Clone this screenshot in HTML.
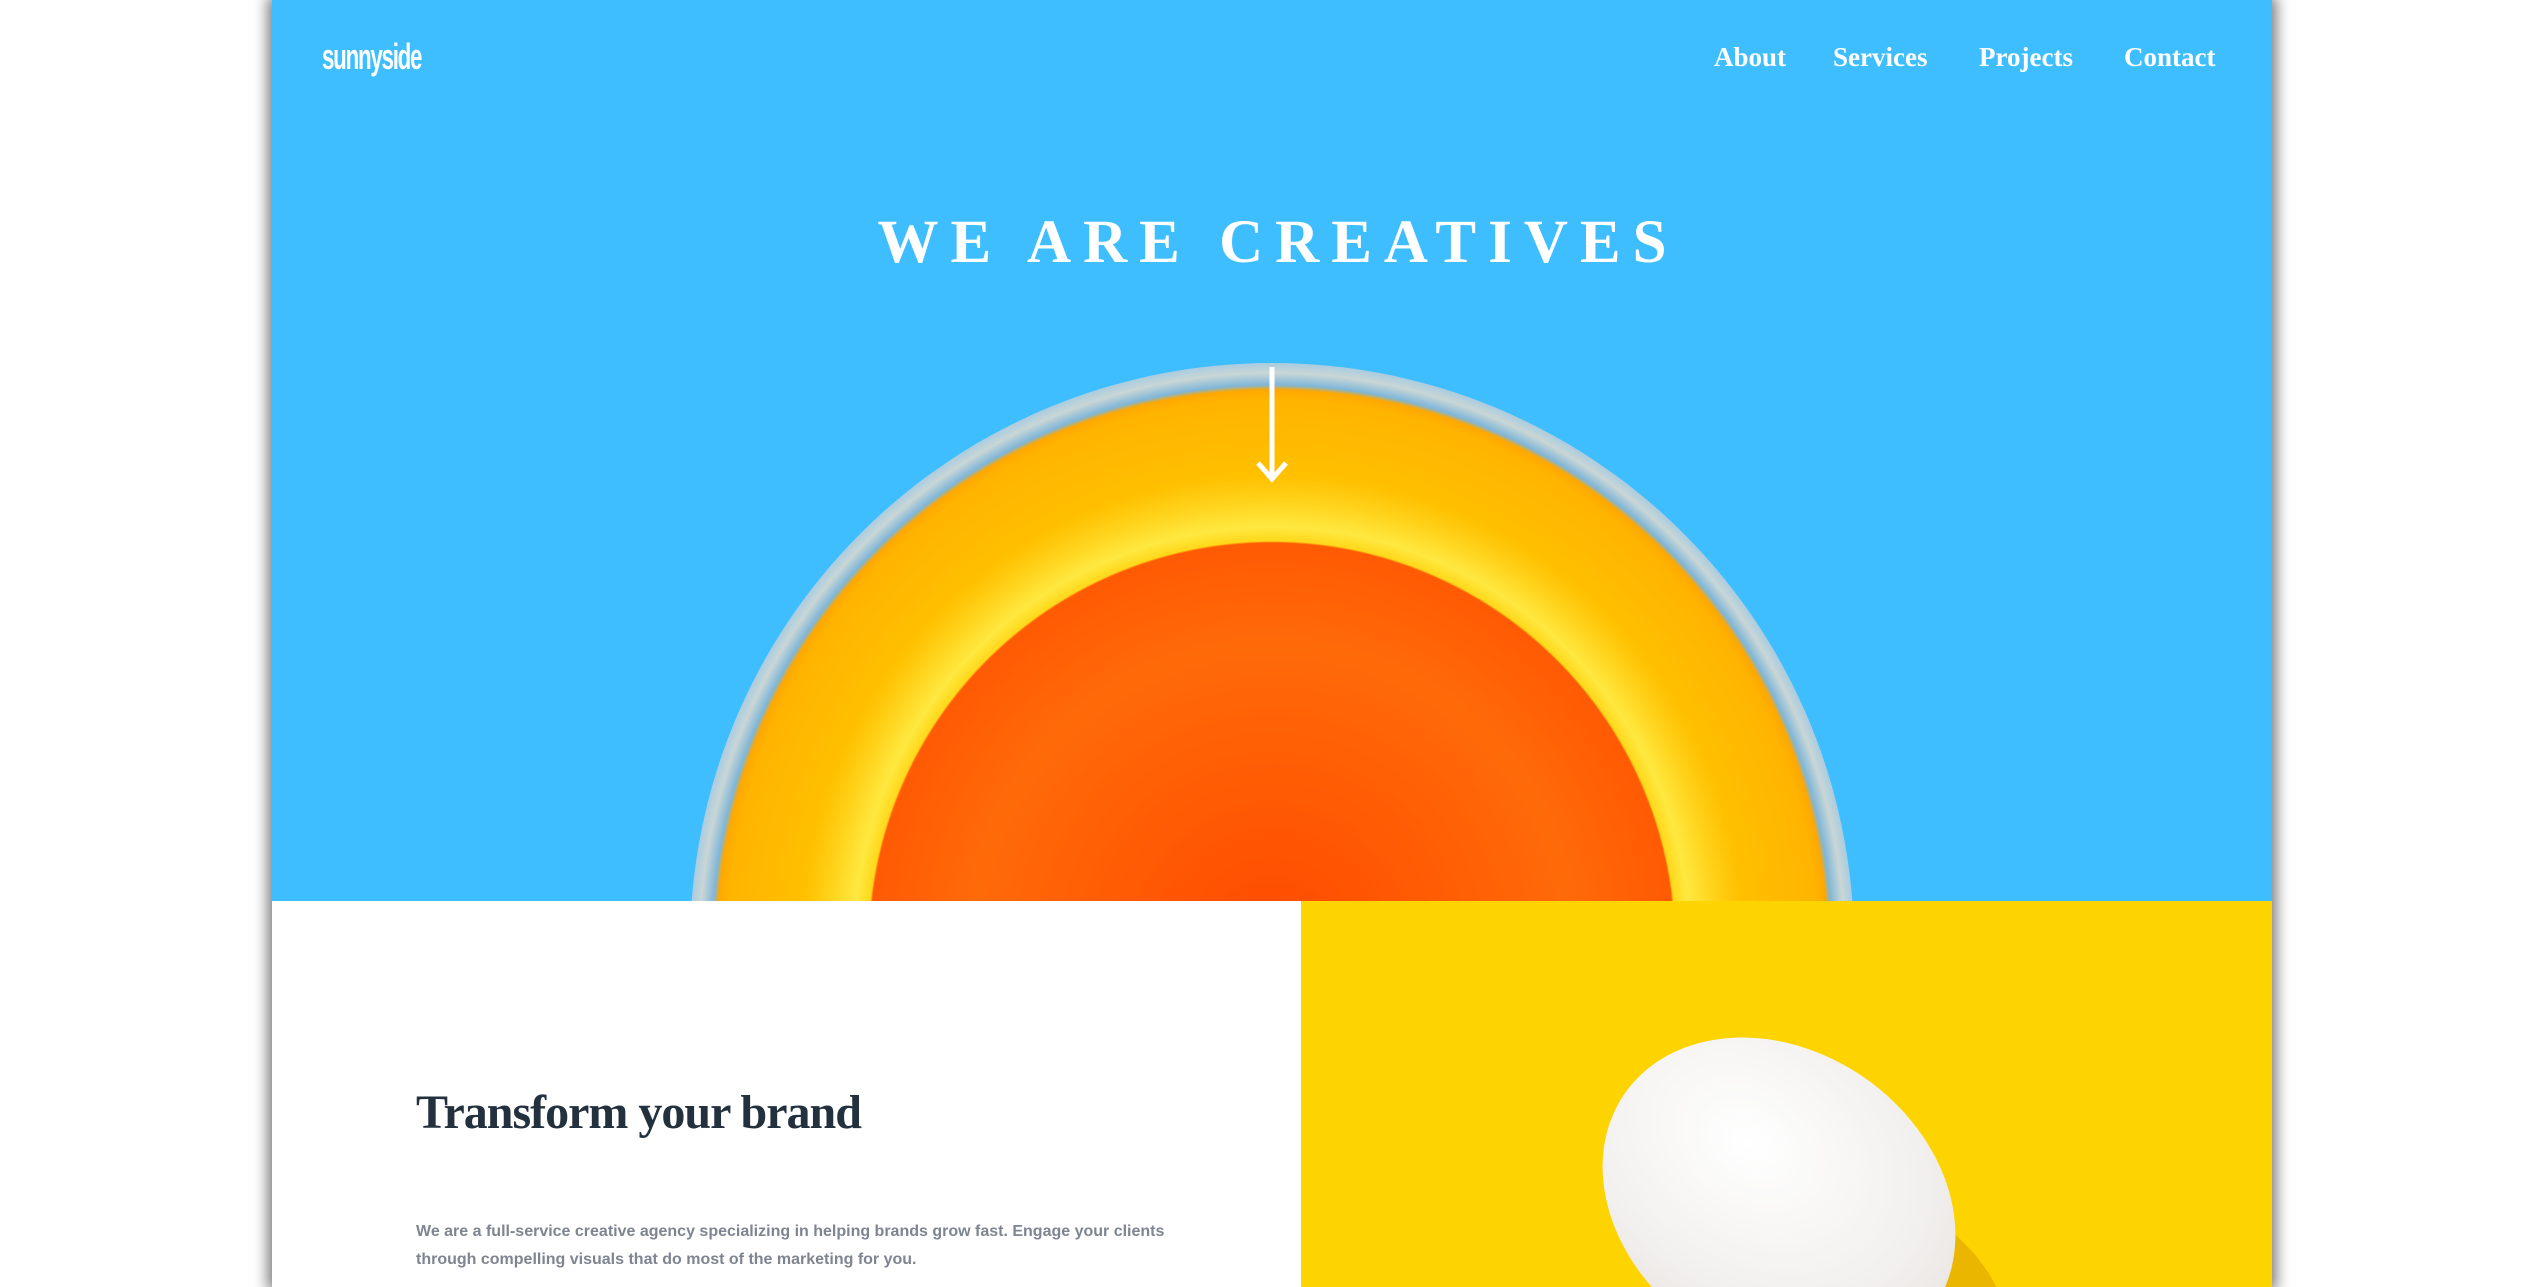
<!DOCTYPE html>
<html><head><meta charset="utf-8"><style>
html,body{margin:0;padding:0;background:#fff;width:2543px;height:1287px;overflow:hidden}
.wrap{position:absolute;left:272px;top:0;width:2000px;height:1287px;box-shadow:0 0 14px 4px rgba(0,0,0,.55);overflow:hidden;background:#fff}
.hero{position:absolute;left:0;top:0;width:2000px;height:901px;background:#3ebeff;overflow:hidden}
.logo{position:absolute;left:50px;top:36px;font-family:"Liberation Sans",sans-serif;font-weight:bold;color:#fff;font-size:36px;letter-spacing:-2px;transform:scaleX(.62);transform-origin:left}
.nav{position:absolute;top:42px;font-family:"Liberation Serif",serif;font-weight:bold;color:#fff;font-size:27px}
h1{position:absolute;left:0;width:2000px;top:208px;margin:0;text-align:center;font-family:"Liberation Serif",serif;font-weight:900;color:#fff;font-size:61px;letter-spacing:12px;text-indent:12px}
.c{position:absolute;border-radius:50%}
.p{font-family:"Liberation Sans",sans-serif}
</style></head><body>
<div class="wrap">
<div class="hero">
<div class="logo">sunnyside</div>
<div class="nav" style="left:1442px">About</div>
<div class="nav" style="left:1561px">Services</div>
<div class="nav" style="left:1707px">Projects</div>
<div class="nav" style="left:1852px">Contact</div>
<div class="c" style="left:418px;top:363px;width:1164px;height:1164px;background:radial-gradient(circle 582px at 50% 50%,#ff4a00 0,#ff6a08 300px,#ff5a04 402px,#ffd81a 404px,#ffe840 418px,#ffd21a 445px,#ffc000 470px,#ffb400 545px,#ffa800 555px,#7fb6d8 560px,#c9d6d6 572px,#a9cce0 582px,rgba(62,190,255,0) 583px)"></div>
<h1>WE ARE CREATIVES</h1>
<svg style="position:absolute;left:980px;top:365px" width="40" height="120"><path d="M20 2V114M6 98L20 114L34 98" stroke="#fff" stroke-width="5" fill="none"/></svg>
</div>
<div style="position:absolute;left:1029px;top:901px;width:971px;height:386px;background:#fed400;overflow:hidden">
<div class="c" style="left:420px;top:300px;width:300px;height:240px;background:#e9b300;opacity:.9;transform:rotate(35deg)"></div>
<div class="c" style="left:290px;top:150px;width:376px;height:300px;background:radial-gradient(ellipse at 35% 40%,#fff 0,#f2f0ee 55%,#ddd8d2 100%);transform:rotate(35deg)"></div>
</div>
<div style="position:absolute;left:144px;top:1085px;font-family:'Liberation Serif',serif;font-weight:bold;color:#23303e;font-size:48px;letter-spacing:-1px">Transform your brand</div>
<div class="p" style="position:absolute;left:144px;top:1218px;width:790px;font-size:16px;line-height:28px;color:#7e8591;font-weight:bold">We are a full-service creative agency specializing in helping brands grow fast. Engage your clients through compelling visuals that do most of the marketing for you.</div>
</div>
</body></html>
